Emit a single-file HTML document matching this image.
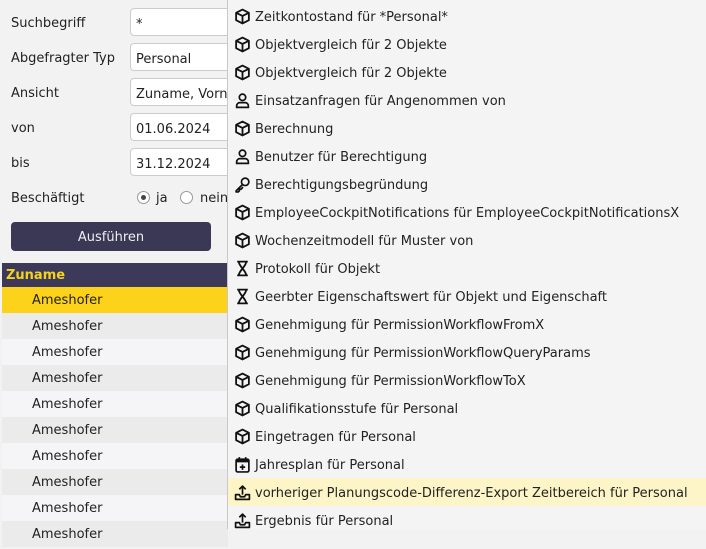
<!DOCTYPE html>
<html><head><meta charset="utf-8"><style>
*{margin:0;padding:0;box-sizing:border-box}
body{width:706px;height:529px;overflow:hidden;background:#f2f2f2;font-family:"DejaVu Sans","Liberation Sans",sans-serif;font-size:13px;color:#222;position:relative}
.lbl{position:absolute;left:11px;font-size:13px}
.inp{position:absolute;left:130px;width:120px;height:28px;background:#fff;border:1px solid #ccc;border-radius:4px;padding:2px 5px 0;line-height:27px;font-size:13px;white-space:nowrap;overflow:hidden}
.btn{position:absolute;left:11px;top:222px;width:200px;height:29px;background:#3b3855;color:#eee;border-radius:4px;text-align:center;line-height:31px;font-size:13px}
.tbl{position:absolute;left:2px;top:263px;width:226px}
.th{height:24px;background:#3c3a58;color:#f5d31a;font-weight:bold;line-height:26px;padding-left:4px;font-size:13px}
.tr{height:26px;line-height:28px;padding-left:30px;font-size:13px}
.menu{position:absolute;left:227px;top:0;width:479px;height:529px;background:#f4f4f4;border-left:1px solid #c8c8c8}
.mi{position:absolute;left:0;width:479px;height:28px;line-height:31px;padding-left:27px;white-space:nowrap;font-size:13px;color:#222}
.mi svg{position:absolute;left:6px;top:6px;width:17px;height:17px}
.hl{background:#fdf5c7}
.rad{position:absolute;top:191px;width:13px;height:13px;border:1px solid #999;border-radius:50%;background:#fff}
</style></head><body>
<div class="lbl" style="top:16px">Suchbegriff</div><div class="inp" style="top:8px">*</div>
<div class="lbl" style="top:51px">Abgefragter Typ</div><div class="inp" style="top:43px">Personal</div>
<div class="lbl" style="top:86px">Ansicht</div><div class="inp" style="top:78px">Zuname, Vorname</div>
<div class="lbl" style="top:121px">von</div><div class="inp" style="top:113px">01.06.2024</div>
<div class="lbl" style="top:156px">bis</div><div class="inp" style="top:148px">31.12.2024</div>
<div class="lbl" style="top:191px">Beschäftigt</div>
<div class="rad" style="left:137px"><div style="width:5px;height:5px;background:#444;border-radius:50%;margin:3px"></div></div>
<div style="position:absolute;left:156px;top:191px">ja</div>
<div class="rad" style="left:180px"></div>
<div style="position:absolute;left:200px;top:191px">nein</div>
<div class="btn">Ausführen</div>
<div class="tbl">
<div class="th">Zuname</div>
<div class="tr" style="background:#fdd21b">Ameshofer</div>
<div class="tr" style="background:#ebebeb">Ameshofer</div>
<div class="tr" style="background:#f5f5f7">Ameshofer</div>
<div class="tr" style="background:#ebebeb">Ameshofer</div>
<div class="tr" style="background:#f5f5f7">Ameshofer</div>
<div class="tr" style="background:#ebebeb">Ameshofer</div>
<div class="tr" style="background:#f5f5f7">Ameshofer</div>
<div class="tr" style="background:#ebebeb">Ameshofer</div>
<div class="tr" style="background:#f5f5f7">Ameshofer</div>
<div class="tr" style="background:#ebebeb">Ameshofer</div>
</div>
<svg width="0" height="0" style="position:absolute">
<defs>
<g id="cube" fill="none" stroke="#111" stroke-width="1.7" stroke-linejoin="round"><path d="M8 1.5L14 4.5V11.5L8 14.5L2 11.5V4.5Z"/><path d="M2 4.5L8 7.5L14 4.5M8 7.5V14.5"/></g>
<g id="user" fill="none" stroke="#111" stroke-width="1.6"><circle cx="8" cy="5" r="3"/><path d="M2.5 14.5V13a3 3 0 0 1 3-3h5a3 3 0 0 1 3 3v1.5Z"/></g>
<g id="key" fill="none" stroke="#111" stroke-width="1.6" stroke-linejoin="round"><circle cx="10.5" cy="5.5" r="3.5"/><path d="M8 8L2 14V15H4L5 14V12.5H6.5L8.5 10.5"/></g>
<g id="hour" fill="none" stroke="#111" stroke-width="1.7"><path d="M3 1.5H13M3 14.5H13M4.5 1.5C4.5 6 11.5 10 11.5 14.5M11.5 1.5C11.5 6 4.5 10 4.5 14.5"/></g>
<g id="cal"><rect x="2" y="3" width="12" height="12" rx="1.5" fill="none" stroke="#111" stroke-width="1.6"/><rect x="2" y="3" width="12" height="3" fill="#111"/><path d="M5 1V4M11 1V4M8 8V13M5.5 10.5H10.5" stroke="#111" stroke-width="1.6"/></g>
<g id="up" fill="none" stroke="#111" stroke-width="1.6" stroke-linejoin="round"><path d="M8 10V2M5 5L8 2L11 5"/><path d="M1.5 10V14.5H14.5V10H11L10 12H6L5 10Z"/></g>
</defs></svg>
<div class="menu">
<div class="mi" style="top:2px"><svg viewBox="0 0 16 16"><use href="#cube"/></svg>Zeitkontostand für *Personal*</div>
<div class="mi" style="top:30px"><svg viewBox="0 0 16 16"><use href="#cube"/></svg>Objektvergleich für 2 Objekte</div>
<div class="mi" style="top:58px"><svg viewBox="0 0 16 16"><use href="#cube"/></svg>Objektvergleich für 2 Objekte</div>
<div class="mi" style="top:86px"><svg viewBox="0 0 16 16"><use href="#user"/></svg>Einsatzanfragen für Angenommen von</div>
<div class="mi" style="top:114px"><svg viewBox="0 0 16 16"><use href="#cube"/></svg>Berechnung</div>
<div class="mi" style="top:142px"><svg viewBox="0 0 16 16"><use href="#user"/></svg>Benutzer für Berechtigung</div>
<div class="mi" style="top:170px"><svg viewBox="0 0 16 16"><use href="#key"/></svg>Berechtigungsbegründung</div>
<div class="mi" style="top:198px"><svg viewBox="0 0 16 16"><use href="#cube"/></svg>EmployeeCockpitNotifications für EmployeeCockpitNotificationsX</div>
<div class="mi" style="top:226px"><svg viewBox="0 0 16 16"><use href="#cube"/></svg>Wochenzeitmodell für Muster von</div>
<div class="mi" style="top:254px"><svg viewBox="0 0 16 16"><use href="#hour"/></svg>Protokoll für Objekt</div>
<div class="mi" style="top:282px"><svg viewBox="0 0 16 16"><use href="#hour"/></svg>Geerbter Eigenschaftswert für Objekt und Eigenschaft</div>
<div class="mi" style="top:310px"><svg viewBox="0 0 16 16"><use href="#cube"/></svg>Genehmigung für PermissionWorkflowFromX</div>
<div class="mi" style="top:338px"><svg viewBox="0 0 16 16"><use href="#cube"/></svg>Genehmigung für PermissionWorkflowQueryParams</div>
<div class="mi" style="top:366px"><svg viewBox="0 0 16 16"><use href="#cube"/></svg>Genehmigung für PermissionWorkflowToX</div>
<div class="mi" style="top:394px"><svg viewBox="0 0 16 16"><use href="#cube"/></svg>Qualifikationsstufe für Personal</div>
<div class="mi" style="top:422px"><svg viewBox="0 0 16 16"><use href="#cube"/></svg>Eingetragen für Personal</div>
<div class="mi" style="top:450px"><svg viewBox="0 0 16 16"><use href="#cal"/></svg>Jahresplan für Personal</div>
<div class="mi hl" style="top:478px"><svg viewBox="0 0 16 16"><use href="#up"/></svg>vorheriger Planungscode-Differenz-Export Zeitbereich für Personal</div>
<div class="mi" style="top:506px"><svg viewBox="0 0 16 16"><use href="#up"/></svg>Ergebnis für Personal</div>
</div>
</body></html>
